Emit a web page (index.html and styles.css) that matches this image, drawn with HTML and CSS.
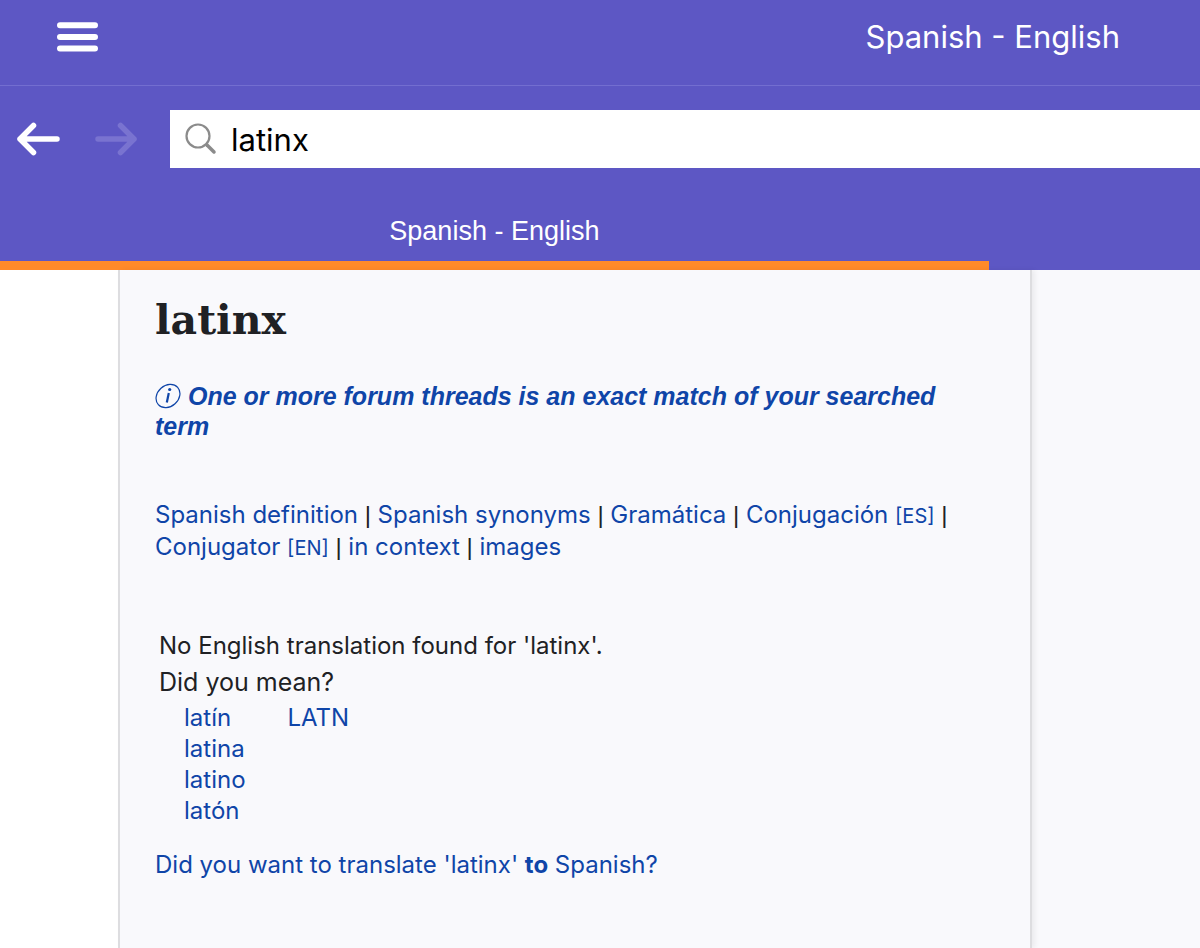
FILE: index.html
```html
<!DOCTYPE html>
<html lang="en">
<head>
    <meta charset="UTF-8">
    <meta name="viewport" content="width=device-width, initial-scale=1.0">
    <title>latinx - Spanish - English</title>
    <link rel="stylesheet" href="styles.css">
</head>
<body>
    <header class="header">
        <div class="topbar">
            <button class="icon-button" type="button" aria-label="Menu">
                <svg width="42" height="30" viewBox="0 0 42 30" stroke="#fff" stroke-width="6" stroke-linecap="round">
                    <path d="M4 3.200H39M4 15H39M4 26.500H39"/>
                </svg>
            </button>
            <span class="dictionary">Spanish - English</span>
        </div>

        <form class="searchbar">
            <div class="history">
                <button class="icon-button" type="button" aria-label="Back">
                    <svg width="44" height="34" viewBox="0 0 44 34" fill="none" stroke="#fff" stroke-width="5.500" stroke-linecap="round" stroke-linejoin="round">
                        <path d="M17.500 3.500L4 17L17.500 30.500M4 17H41"/>
                    </svg>
                </button>
                <button class="icon-button forward" type="button" aria-label="Forward" disabled>
                    <svg width="44" height="34" viewBox="0 0 44 34" fill="none" stroke="#7973d0" stroke-width="5.500" stroke-linecap="round" stroke-linejoin="round">
                        <path d="M26.500 3.500L40 17L26.500 30.500M40 17H4"/>
                    </svg>
                </button>
            </div>
            <div class="search">
                <svg width="32" height="32" viewBox="0 0 32 32" fill="none" stroke="#8b8b8b" stroke-linecap="round">
                    <circle cx="13" cy="13" r="11.500" stroke-width="2.200"/>
                    <path d="M22 22L29 29" stroke-width="3.500"/>
                </svg>
                <input class="search-input" type="text" value="latinx" aria-label="Search">
            </div>
        </form>

        <nav class="tabs">
            <a class="tab" href="#">Spanish - English</a>
        </nav>
    </header>

    <div class="page">
        <main class="article">
            <h1>latinx</h1>

            <a class="notice" href="#"><svg class="info" width="26" height="26" viewBox="0 0 26 26" fill="none" stroke="#0f45a8">
                <ellipse cx="13" cy="13" rx="13" ry="10.500" stroke-width="1.200" transform="rotate(-42 13 13)"/>
                <path d="M13.800 10L11.800 19.500" stroke-width="2.200"/>
                <circle cx="14.700" cy="6.500" r="1.600" fill="#0f45a8" stroke="none"/>
            </svg> One or more forum threads is an exact match of your searched term</a>

            <p class="links">
                <a href="#">Spanish definition</a><span class="sep"> | </span><a href="#">Spanish synonyms</a><span class="sep"> | </span><a href="#">Gramática</a><span class="sep"> | </span><a href="#">Conjugación <small>[ES]</small></a><span class="sep"> | </span><a href="#">Conjugator <small>[EN]</small></a><span class="sep"> | </span><a href="#">in context</a><span class="sep"> | </span><a href="#">images</a>
            </p>

            <p class="not-found">No English translation found for 'latinx'.</p>
            <p class="did-you-mean">Did you mean?</p>
            <div class="suggestions">
                <ul>
                    <li><a href="#">latín</a></li>
                    <li><a href="#">latina</a></li>
                    <li><a href="#">latino</a></li>
                    <li><a href="#">latón</a></li>
                </ul>
                <ul>
                    <li><a href="#">LATN</a></li>
                </ul>
            </div>

            <a class="reverse" href="#">Did you want to translate 'latinx' <strong>to</strong> Spanish?</a>
        </main>
    </div>
</body>
</html>
```
FILE: styles.css
```css
* {
    box-sizing: border-box;
}

body {
    display: flex;
    flex-direction: column;
    min-height: 100vh;
    margin: 0;
    font-family: Inter, "Liberation Sans", sans-serif;
    font-size: 24px;
    color: #202124;
    background: #f9f9fc;
}

a {
    color: #0f45a8;
    text-decoration: none;
}

.header {
    background: #5d57c4;
    color: white;
}

.topbar {
    display: flex;
    align-items: center;
    justify-content: space-between;
    height: 86px;
    padding: 0 80px 12px 56px;
    border-bottom: 1px solid #736ed0;
}

.icon-button {
    display: flex;
    padding: 0;
    border: none;
    background: none;
    cursor: pointer;
}

.dictionary {
    font-size: 31px;
}

.searchbar {
    display: flex;
    margin: 0;
    padding: 24px 0;
}

.history {
    display: flex;
    align-items: center;
    gap: 34px;
    width: 170px;
    padding-left: 16px;
}

.search {
    display: flex;
    flex: 1;
    align-items: center;
    gap: 14px;
    height: 58px;
    padding-left: 15px;
    background: white;
}

.search-input {
    flex: 1;
    min-width: 0;
    padding: 0;
    border: none;
    outline: none;
    font: 31px Inter, "Liberation Sans", sans-serif;
    color: black;
    background: none;
}

.tab {
    display: block;
    width: 82.4%;
    padding: 24px 0 15px;
    border-bottom: 9px solid #ff8a2a;
    font-family: "Liberation Sans", Arial, sans-serif;
    font-size: 27px;
    line-height: 30px;
    text-align: center;
    color: white;
}

.page {
    display: grid;
    flex: 1;
    grid-template-columns: 118px 1fr 168px;
    background: linear-gradient(to right, white 118px, #f9f9fc 118px);
}

.article {
    grid-column: 2;
    padding: 20px 64px 60px 35px;
    border: solid #dddde0;
    border-width: 0 2px;
    background: #f9f9fc;
    box-shadow: 3px 0 5px rgba(0, 0, 0, 0.06);
}

h1 {
    margin: 0 0 31px;
    font-family: Georgia, "DejaVu Serif", serif;
    font-size: 41px;
    line-height: 60px;
}

.notice {
    display: block;
    font-family: "Liberation Sans", Arial, sans-serif;
    font-size: 25px;
    font-style: italic;
    font-weight: bold;
    line-height: 30px;
}

.info {
    vertical-align: -4px;
}

.links {
    margin: 58px 0 64px;
    line-height: 32px;
}

.links small {
    font-size: 20px;
    line-height: 20px;
}

.sep {
    font-family: "Liberation Sans", Arial, sans-serif;
    line-height: 24px;
}

.not-found,
.did-you-mean {
    margin: 0 4px;
    line-height: 37px;
}

.did-you-mean {
    font-size: 25px;
}

.suggestions {
    display: flex;
    gap: 42px;
    margin-top: 1px;
    padding-left: 29px;
    line-height: 31px;
}

ul {
    margin: 0;
    padding: 0;
    list-style: none;
}

.reverse {
    display: block;
    margin-top: 24px;
    line-height: 30px;
}
```
